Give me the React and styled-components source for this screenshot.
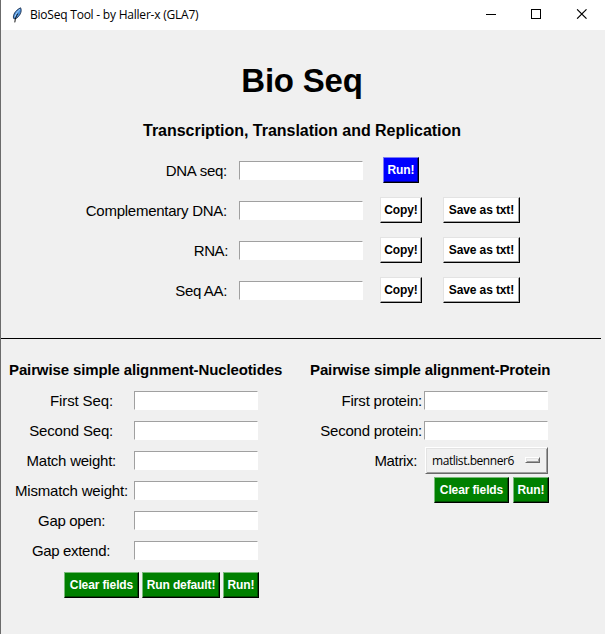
import React from "react";
import styled, { createGlobalStyle } from "styled-components";

const GlobalStyle = createGlobalStyle`
  * { box-sizing: border-box; }
  html, body { margin: 0; padding: 0; background: #f0f0f0; overflow: hidden; }
`;

const Window = styled.div`
  width: 605px;
  height: 634px;
  border-left: 1px solid #6b6b6b;
  background: #f0f0f0;
  color: #000;
  font-family: "Liberation Sans", Arial, sans-serif;
  overflow: hidden;
`;

const TitleBar = styled.header`
  display: flex;
  align-items: center;
  height: 30px;
  padding: 0 18px 0 9px;
  background: #fff;
`;

const WindowTitle = styled.span`
  flex: 1;
  margin-left: 6px;
  font: 12px/16px "Open Sans", "Noto Sans", sans-serif;
  letter-spacing: -0.22px;
  white-space: nowrap;
`;

const WindowControls = styled.div`
  display: flex;
  gap: 34px;
  margin-top: -2px;
  svg { display: block; }
`;

const Heading = styled.h1`
  margin: 32px 0 0;
  padding-right: 2px;
  text-align: center;
  font-size: 33px;
  line-height: 38px;
  letter-spacing: -0.2px;
`;

const Subheading = styled.h2`
  margin: 22px 0 0;
  padding-right: 2px;
  text-align: center;
  font-size: 16px;
  line-height: 18px;
  letter-spacing: -0.03px;
`;

const SequenceForm = styled.section`
  height: 198px;
  padding-top: 10px;
`;

const SequenceRow = styled.div`
  display: flex;
  align-items: center;
  height: 40px;
`;

const Label = styled.label`
  flex: none;
  width: ${(p) => p.$width}px;
  margin-right: ${(p) => p.$gap}px;
  padding-top: 2px;
  text-align: right;
  white-space: nowrap;
  font-size: 15px;
  line-height: 18px;
  letter-spacing: ${(p) => p.$spacing || 0}px;
`;

const Entry = styled.input`
  flex: none;
  width: 124px;
  height: 19px;
  margin: 1px 0 0;
  padding: 0 2px;
  border: 1px solid;
  border-color: #a0a0a0 #fff #fff #a0a0a0;
  border-radius: 0;
  outline: 0;
  background: #fff;
`;

const tones = {
  white: { face: "#fff", ink: "#000", light: "#e3e3e3", shade: "#a0a0a0" },
  blue: { face: "#00f", ink: "#fff", light: "#7c7cf5", shade: "#000099" },
  green: { face: "#008000", ink: "#fff", light: "#78bc78", shade: "#004d00" },
};

const Button = styled.button`
  flex: none;
  width: ${(p) => p.$width}px;
  height: 26px;
  margin: 0 0 0 ${(p) => p.$left || 0}px;
  padding: 0;
  border: 1px solid;
  border-color: ${(p) => `${tones[p.$tone].light} #000 #000 ${tones[p.$tone].light}`};
  border-radius: 0;
  background: ${(p) => tones[p.$tone].face};
  box-shadow: inset -1px -1px ${(p) => tones[p.$tone].shade};
  color: ${(p) => tones[p.$tone].ink};
  font: bold 12px/14px "Liberation Sans", Arial, sans-serif;
  letter-spacing: -0.12px;
  white-space: nowrap;
`;

const Divider = styled.hr`
  width: 600px;
  height: 1px;
  margin: 0;
  border: 0;
  background: #000;
`;

const Alignments = styled.div`
  display: flex;
  padding-top: 22px;
`;

const Panel = styled.section`
  width: ${(p) => p.$width}px;
`;

const PanelTitle = styled.h3`
  margin: 0 0 6px ${(p) => p.$left}px;
  font-size: 15px;
  line-height: 18px;
  letter-spacing: -0.12px;
  white-space: nowrap;
`;

const FieldRow = styled.div`
  display: flex;
  align-items: center;
  height: 30px;
`;

const Actions = styled.div`
  display: flex;
  padding: ${(p) => p.$top}px 0 0 ${(p) => p.$left}px;
`;

const OptionMenu = styled.div`
  display: flex;
  align-items: center;
  justify-content: space-between;
  width: 123px;
  height: 27px;
  padding: 1px 7px 0 6px;
  border: 1px solid;
  border-color: #fff #696969 #696969 #fff;
  box-shadow: inset 1px 1px #e3e3e3, inset -1px -1px #a0a0a0;
  font: 12px/16px "Open Sans", "Noto Sans", sans-serif;
  letter-spacing: -0.45px;
`;

const Indicator = styled.span`
  flex: none;
  width: 15px;
  height: 6px;
  margin-bottom: 2px;
  border: 1px solid;
  border-color: #fff #696969 #696969 #fff;
  box-shadow: inset 1px 1px #e3e3e3, inset -1px -1px #a0a0a0;
`;

const sequenceFields = [
  { name: "DNA seq:", end: 226, spacing: -0.25 },
  { name: "Complementary DNA:", end: 226, spacing: -0.26 },
  { name: "RNA:", end: 227, spacing: -0.4 },
  { name: "Seq AA:", end: 226, spacing: -0.35 },
];

const nucleotideFields = [
  { name: "First Seq:", end: 112, spacing: -0.12 },
  { name: "Second Seq:", end: 112, spacing: -0.2 },
  { name: "Match weight:", end: 115, spacing: -0.24 },
  { name: "Mismatch weight:", end: 127, spacing: -0.18 },
  { name: "Gap open:", end: 104, spacing: -0.35 },
  { name: "Gap extend:", end: 109, spacing: -0.33 },
];

const proteinFields = [
  { name: "First protein:", spacing: -0.2 },
  { name: "Second protein:", spacing: -0.22 },
];

function Feather() {
  return (
    <svg width="14" height="18" viewBox="0 0 14 18">
      <path d="M3.6 12.4C2.6 9.2 5.2 4.4 10.6 1.8C12.4 5.3 9.8 10.6 5.2 13Z" fill="#4a90dc" stroke="#1b2c48" strokeWidth="0.9" />
      <path d="M10 3.4C7.4 5.4 5.8 8 4.9 11" fill="none" stroke="#a8d4fa" strokeWidth="1" />
      <path d="M7.8 7.6C6.2 10 5.2 12.4 4.8 16.4" fill="none" stroke="#111" strokeWidth="1" />
    </svg>
  );
}

export default function App() {
  return (
    <Window>
      <GlobalStyle />
      <TitleBar>
        <Feather />
        <WindowTitle>BioSeq Tool - by Haller-x (GLA7)</WindowTitle>
        <WindowControls>
          <svg width="11" height="10" viewBox="0 0 11 10" shapeRendering="crispEdges">
            <path d="M0 5.5H10" stroke="#000" />
          </svg>
          <svg width="11" height="10" viewBox="0 0 11 10" shapeRendering="crispEdges">
            <rect x="0.5" y="0.5" width="9" height="9" fill="none" stroke="#000" />
          </svg>
          <svg width="11" height="10" viewBox="0 0 11 10">
            <path d="M1.1 0.3L10.5 9.7M10.5 0.3L1.1 9.7" stroke="#000" strokeWidth="1.1" />
          </svg>
        </WindowControls>
      </TitleBar>

      <Heading>Bio Seq</Heading>
      <Subheading>Transcription, Translation and Replication</Subheading>
      <SequenceForm>
        {sequenceFields.map((f, i) => (
          <SequenceRow key={f.name}>
            <Label $width={f.end} $gap={238 - f.end} $spacing={f.spacing}>{f.name}</Label>
            <Entry aria-label={f.name} />
            {i === 0 ? (
              <Button $tone="blue" $width={36} $left={20}>Run!</Button>
            ) : (
              <>
                <Button $tone="white" $width={42} $left={17}>Copy!</Button>
                <Button $tone="white" $width={77} $left={21}>Save as txt!</Button>
              </>
            )}
          </SequenceRow>
        ))}
      </SequenceForm>

      <Divider />

      <Alignments>
        <Panel $width={300}>
          <PanelTitle $left={8}>Pairwise simple alignment-Nucleotides</PanelTitle>
          {nucleotideFields.map((f) => (
            <FieldRow key={f.name}>
              <Label $width={f.end} $gap={133 - f.end} $spacing={f.spacing}>{f.name}</Label>
              <Entry aria-label={f.name} />
            </FieldRow>
          ))}
          <Actions $left={63} $top={7}>
            <Button $tone="green" $width={75}>Clear fields</Button>
            <Button $tone="green" $width={78} $left={3}>Run default!</Button>
            <Button $tone="green" $width={36} $left={3}>Run!</Button>
          </Actions>
        </Panel>

        <Panel $width={300}>
          <PanelTitle $left={9}>Pairwise simple alignment-Protein</PanelTitle>
          {proteinFields.map((f) => (
            <FieldRow key={f.name}>
              <Label $width={121} $gap={2} $spacing={f.spacing}>{f.name}</Label>
              <Entry aria-label={f.name} />
            </FieldRow>
          ))}
          <FieldRow>
            <Label $width={116} $gap={8} $spacing={-0.35}>Matrix:</Label>
            <OptionMenu>matlist.benner6<Indicator /></OptionMenu>
          </FieldRow>
          <Actions $left={133} $top={2}>
            <Button $tone="green" $width={75}>Clear fields</Button>
            <Button $tone="green" $width={36} $left={4}>Run!</Button>
          </Actions>
        </Panel>
      </Alignments>
    </Window>
  );
}
